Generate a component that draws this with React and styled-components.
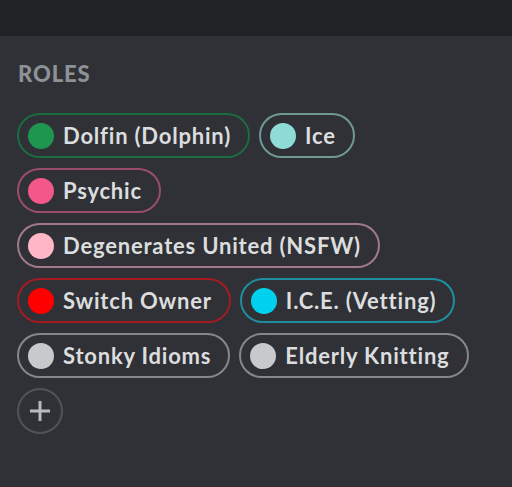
import React from 'react';
import styled, { createGlobalStyle } from 'styled-components';

const Global = createGlobalStyle`
  html, body {
    margin: 0;
    padding: 0;
    background: #2f3136;
  }
  body {
    font-family: Lato, "Noto Sans", sans-serif;
  }
`;

const Page = styled.div`
  width: 512px;
  height: 487px;
  display: flex;
  flex-direction: column;
  background: #2f3136;
  overflow: hidden;
`;

const TopBar = styled.div`
  height: 36px;
  flex-shrink: 0;
  background: #202225;
`;

const Section = styled.div`
  padding: 25px 17px 0 17px;
`;

const Heading = styled.h2`
  margin: 0 0 26px 1px;
  font-size: 22px;
  line-height: 26px;
  font-weight: 900;
  color: #8e9297;
  letter-spacing: 0.9px;
`;

const RoleList = styled.div`
  display: flex;
  flex-direction: column;
  align-items: flex-start;
  gap: 10px;
`;

const Row = styled.div`
  display: flex;
  gap: 9px;
`;

const Pill = styled.div`
  box-sizing: border-box;
  height: 45px;
  display: flex;
  align-items: center;
  gap: 9px;
  padding: 0 17px 0 9px;
  border: 2px solid ${p => p.$border};
  border-radius: 23px;
`;

const Dot = styled.span`
  width: 26px;
  height: 26px;
  border-radius: 50%;
  background: ${p => p.$color};
  flex-shrink: 0;
`;

const Name = styled.span`
  font-size: 22px;
  font-weight: 700;
  letter-spacing: 0.8px;
  color: #dcddde;
  white-space: nowrap;
`;

const AddButton = styled.button`
  box-sizing: border-box;
  width: 46px;
  height: 46px;
  padding: 0;
  border-radius: 50%;
  border: 2px solid #4f545c;
  background: transparent;
  display: flex;
  align-items: center;
  justify-content: center;
  color: #b9bbbe;
`;

const rows = [
  [
    { name: 'Dolfin (Dolphin)', color: '#1f9650', border: '#1d6b40' },
    { name: 'Ice', color: '#8fdbd8', border: '#6e9995' },
  ],
  [{ name: 'Psychic', color: '#f4578a', border: '#9a4d6b' }],
  [{ name: 'Degenerates United (NSFW)', color: '#ffb6c6', border: '#a07a87' }],
  [
    { name: 'Switch Owner', color: '#ff0000', border: '#a41c23' },
    { name: 'I.C.E. (Vetting)', color: '#00d2ee', border: '#1f8ea0' },
  ],
  [
    { name: 'Stonky Idioms', color: '#c8c9cc', border: '#85878b' },
    { name: 'Elderly Knitting', color: '#c8c9cc', border: '#85878b' },
  ],
];

export default function App() {
  return (
    <Page>
      <Global />
      <TopBar />
      <Section>
        <Heading>ROLES</Heading>
        <RoleList>
          {rows.map((row, i) => (
            <Row key={i}>
              {row.map(role => (
                <Pill key={role.name} $border={role.border}>
                  <Dot $color={role.color} />
                  <Name>{role.name}</Name>
                </Pill>
              ))}
            </Row>
          ))}
          <AddButton aria-label="Add role">
            <svg width="24" height="24" viewBox="0 0 24 24">
              <path d="M12 2v20M2 12h20" stroke="currentColor" strokeWidth="3" />
            </svg>
          </AddButton>
        </RoleList>
      </Section>
    </Page>
  );
}
